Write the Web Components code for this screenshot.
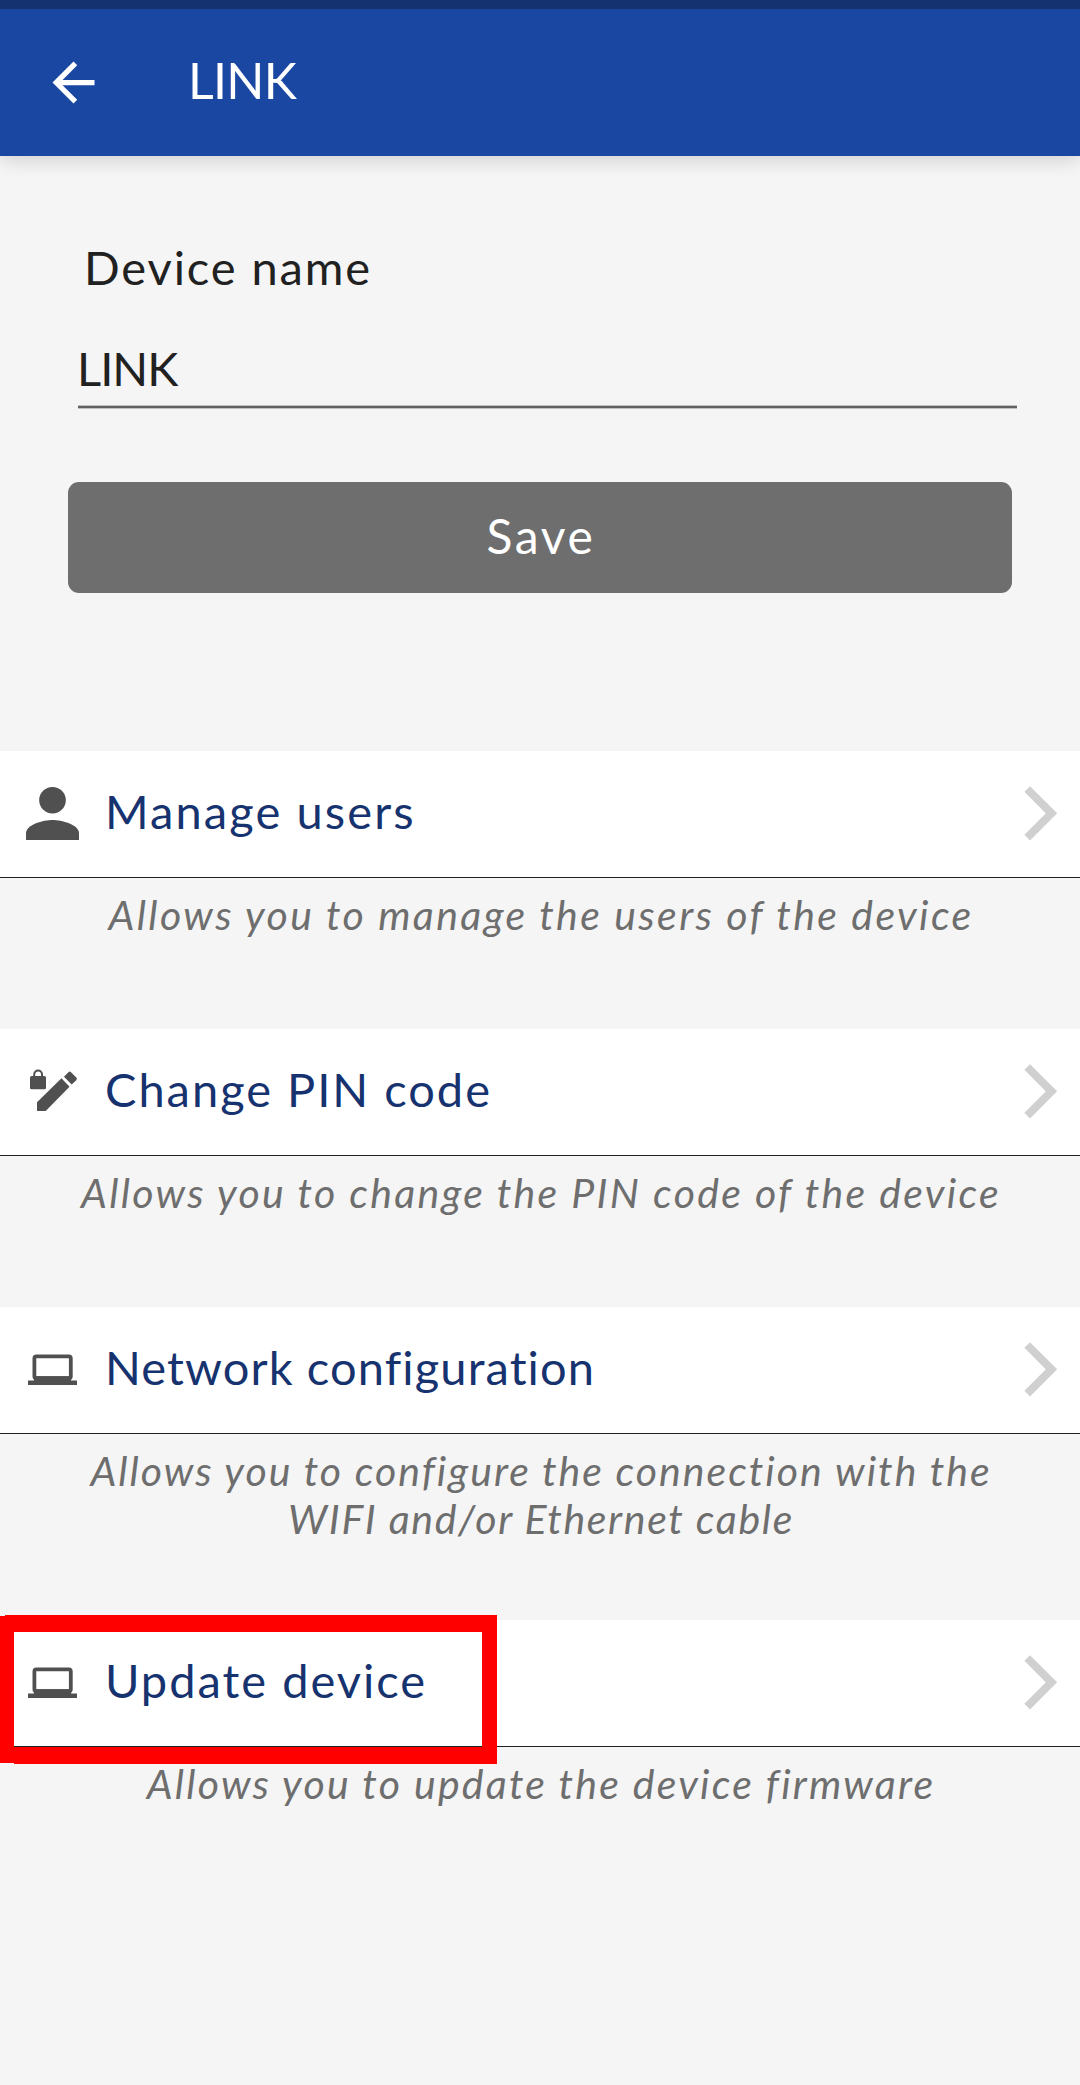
<!DOCTYPE html>
<html lang="en">
<head>
<meta charset="utf-8">
<title>LINK</title>
<style>
    body{
        margin: 0;
        background: #f5f5f5;
        font-family: Lato, "Open Sans", sans-serif;
        color: #212121;
    }
</style>
</head>
<body>
<device-screen>
    <app-bar slot="bar">LINK</app-bar>
    <device-form label="Device name" value="LINK">Save</device-form>
    <menu-entry icon="person" style="--label-gap: 2.1px; --text-gap: 2.4px">
        <span slot="label">Manage users</span>
        Allows you to manage the users of the device
    </menu-entry>
    <menu-entry icon="pin" style="--label-gap: 1.98px; --text-gap: 2.29px">
        <span slot="label">Change PIN code</span>
        Allows you to change the PIN code of the device
    </menu-entry>
    <menu-entry icon="laptop" style="--label-gap: 1.12px; --text-gap: 2.01px">
        <span slot="label">Network configuration</span>
        Allows you to configure the connection with the<br>
        <span style="letter-spacing: 1.67px">WIFI and/or Ethernet cable</span>
    </menu-entry>
    <menu-entry icon="laptop" marked style="--label-gap: 2px; --text-gap: 2.22px">
        <span slot="label">Update device</span>
        Allows you to update the device firmware
    </menu-entry>
</device-screen>

<script>
const icons = {
    person: `
        <circle cx="40.5" cy="27.2" r="13.3"/>
        <path d="M14 67V60.3C14 51.5 31.6 47 40.5 47S67 51.5 67 60.3V67z"/>`,
    pin: `
        <rect x="18" y="25" width="16" height="13.3" rx="1.6"/>
        <path d="M22.2 26v-2.6a3.9 3.9 0 0 1 7.8 0V26" fill="none" stroke="#505050" stroke-width="2"/>
        <path d="M25 60v-8.7l24.5-24 8 8.5L33.7 60z"/>
        <path d="M52 25.7l4.4-4.5q1.3-1.3 2.6 0l5.3 5.4q1.3 1.3 0 2.6L59.7 33.6z"/>`,
    laptop: `
        <rect x="22.4" y="27.4" width="36.4" height="21.8" rx="2" fill="none" stroke="#505050" stroke-width="3.8"/>
        <path d="M22 47.2h37v4.3h6V56H16v-4.5h6z"/>`
}

class DeviceScreen extends HTMLElement {
    constructor () {
    super();
    this.attachShadow({mode: 'open'})
    this.shadowRoot.innerHTML = `
        <style>
            :host{
                display: flex;
                flex-direction: column;
                min-height: 2085px;
                overflow: hidden;
            }
        </style>
        <slot name="bar"></slot>
        <slot></slot>
    `
    }
}

class AppBar extends HTMLElement {
    constructor () {
    super();
    this.attachShadow({mode: 'open'})
    this.shadowRoot.innerHTML = `
        <style>
            :host{
                display: flex;
                align-items: center;
                height: 147px;
                padding-left: 42px;
                border-top: 9px solid #153270;
                background: #1a47a2;
                color: #fff;
                box-shadow: 0 4px 18px rgba(0, 0, 0, .15);
            }

            svg{
                width: 63px;
                height: 63px;
                fill: #fff;
            }

            .title{
                margin-left: 83px;
                padding-bottom: 5px;
                font-size: 50px;
                letter-spacing: -.7px;
            }
        </style>
        <svg viewBox="0 0 24 24"><path d="M20 11H7.83l5.59-5.59L12 4l-8 8 8 8 1.41-1.41L7.83 13H20v-2z"/></svg>
        <div class="title"><slot></slot></div>
    `
    }
}

class DeviceForm extends HTMLElement {
    constructor () {
    super();
    this.attachShadow({mode: 'open'})
    this.shadowRoot.innerHTML = `
        <style>
            :host{
                display: block;
                padding: 83px 68px 158px;
                font-size: 47px;
                line-height: 56px;
            }

            .label{
                padding-left: 16px;
                letter-spacing: 1.9px;
            }

            .field{
                margin: 45px -5px 0 9px;
                padding-bottom: 9px;
                letter-spacing: -1px;
            }

            .line{
                height: 2px;
                margin: 0 -5px 0 10px;
                background: #616161;
                border: solid #c0c0c0;
                border-width: 1px 0;
            }

            .save{
                display: flex;
                align-items: center;
                justify-content: center;
                box-sizing: border-box;
                height: 111px;
                margin-top: 73px;
                padding: 0 0 4px 2px;
                border-radius: 11px;
                background: #6e6e6e;
                color: #fff;
                font-size: 48px;
                letter-spacing: 2.6px;
            }
        </style>
        <div class="label">${this.getAttribute("label")}</div>
        <div class="field">${this.getAttribute("value")}</div>
        <div class="line"></div>
        <div class="save"><slot></slot></div>
    `
    }
}

class MenuEntry extends HTMLElement {
    constructor () {
    super();
    this.attachShadow({mode: 'open'})
    this.shadowRoot.innerHTML = `
        <style>
            :host{
                display: block;
                position: relative;
                box-sizing: border-box;
                min-height: 278px;
                padding-bottom: 77px;
            }

            .row{
                display: flex;
                align-items: center;
                box-sizing: border-box;
                height: 127px;
                padding: 22px 0 24px 12px;
                border-bottom: 1px solid #212121;
                background: #fff;
            }

            .row svg{
                flex: none;
                width: 80px;
                height: 80px;
                fill: #505050;
            }

            .label{
                flex: 1;
                padding: 0 0 4px 13px;
                color: #17336f;
                font-size: 47px;
                letter-spacing: var(--label-gap);
            }

            .text{
                padding: 13px 0 0 2px;
                color: #6e6e6e;
                font-size: 41px;
                font-style: italic;
                line-height: 48px;
                text-align: center;
                letter-spacing: var(--text-gap);
            }

            /* highlight frame drawn over the row */
            .mark{
                position: absolute;
                top: -5px;
                left: 0;
                fill: #f00;
            }
        </style>
        <div class="row">
            <svg viewBox="0 0 80 80">${icons[this.getAttribute("icon")]}</svg>
            <div class="label"><slot name="label"></slot></div>
            <svg viewBox="0 0 80 80"><path d="M27.2 16L51.5 40.3 27.2 64.6" fill="none" stroke="#d0d0d0" stroke-width="8"/></svg>
        </div>
        <div class="text"><slot></slot></div>
        ${this.hasAttribute("marked") ? `<svg class="mark" width="497" height="149"><path fill-rule="evenodd" d="M5 0H497V149H14V148H0V1H5zM14 17V132H482V17z"/></svg>` : ""}
    `
    }
}

window.customElements.define('device-screen', DeviceScreen)
window.customElements.define('app-bar', AppBar)
window.customElements.define('device-form', DeviceForm)
window.customElements.define('menu-entry', MenuEntry)
</script>
</body>
</html>
